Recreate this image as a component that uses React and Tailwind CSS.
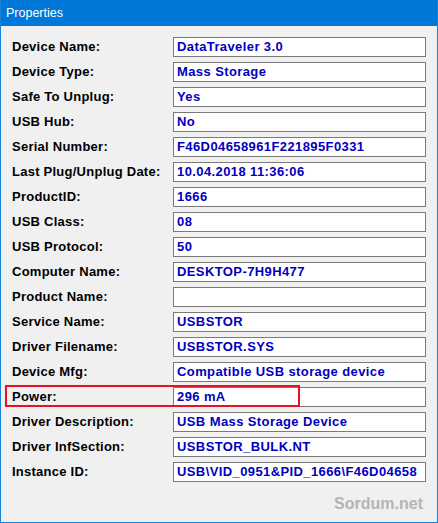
const ROWS = [
  ['Device Name:', 'DataTraveler 3.0'],
  ['Device Type:', 'Mass Storage'],
  ['Safe To Unplug:', 'Yes'],
  ['USB Hub:', 'No'],
  ['Serial Number:', 'F46D04658961F221895F0331'],
  ['Last Plug/Unplug Date:', '10.04.2018 11:36:06'],
  ['ProductID:', '1666'],
  ['USB Class:', '08'],
  ['USB Protocol:', '50'],
  ['Computer Name:', 'DESKTOP-7H9H477'],
  ['Product Name:', ''],
  ['Service Name:', 'USBSTOR'],
  ['Driver Filename:', 'USBSTOR.SYS'],
  ['Device Mfg:', 'Compatible USB storage device'],
  ['Power:', '296 mA'],
  ['Driver Description:', 'USB Mass Storage Device'],
  ['Driver InfSection:', 'USBSTOR_BULK.NT'],
  ['Instance ID:', 'USB\\VID_0951&PID_1666\\F46D04658'],
]

export default function App() {
  return (
    <div className="flex h-[523px] w-[438px] flex-col border border-t-0 border-[#1883d7] bg-[#f0f0f0] font-['Liberation_Sans',sans-serif]">
      <div className="flex h-[26px] shrink-0 items-center bg-[#0078d7] pl-[5px] text-[12.5px] text-white">
        Properties
      </div>

      <div className="flex flex-col gap-[5px] pt-[11px]">
        {ROWS.map(([label, value]) => (
          <div key={label} className="relative flex h-[20px] items-center">
            {/* red highlight around the Power row */}
            {label === 'Power:' && (
              <div className="pointer-events-none absolute left-[4px] top-[-2px] h-[22px] w-[295px] border-2 border-[#e81123]" />
            )}
            <span className="w-[172px] shrink-0 pl-[11px] text-[13px] font-bold tracking-[0.25px] text-black">{label}</span>
            <div className="flex h-[20px] w-[253px] items-center overflow-hidden border border-[#7a7a7a] bg-white pl-[3px] text-[13px] font-bold tracking-[0.4px] whitespace-nowrap text-[#0000c0]">
              {value}
            </div>
          </div>
        ))}
      </div>

      <div className="mt-auto flex justify-end pb-[6px] pr-[14px] text-[16px] font-bold text-[#b4b4b4]">
        Sordum.net
      </div>
    </div>
  )
}
